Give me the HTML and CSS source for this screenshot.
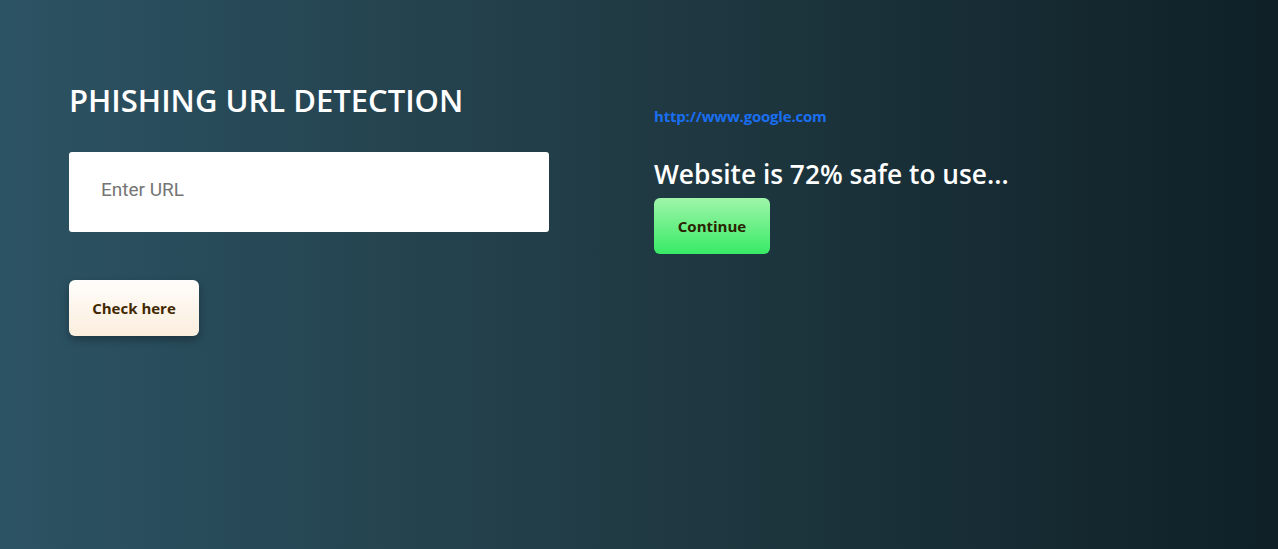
FILE: index.html
```html
<!DOCTYPE html>
<html lang="en">
<head>
<meta charset="utf-8">
<title>Phishing URL Detection</title>
<link rel="stylesheet" href="styles.css">
</head>
<body>
<main class="page">
  <section class="left">
    <h2 class="title">PHISHING URL DETECTION</h2>
    <form class="form">
      <input class="url-input" type="text" placeholder="Enter URL">
      <button class="btn btn-check" type="button">Check here</button>
    </form>
  </section>
  <section class="right">
    <a class="link" href="#">http://www.google.com</a>
    <h3 class="result">Website is 72% safe to use...</h3>
    <button class="btn btn-continue" type="button">Continue</button>
  </section>
</main>
</body>
</html>
```
FILE: styles.css
```css
html, body {
  margin: 0;
  height: 100%;
}
body {
  background: linear-gradient(to right, #2c5364, #203a43, #0f2027);
  font-family: "Open Sans", "Noto Sans", sans-serif;
  color: #fff;
}
.page {
  display: grid;
  grid-template-columns: 585px 1fr;
  padding: 78px 0 0 69px;
}
.title {
  margin: 0;
  font-size: 31px;
  font-weight: 600;
  line-height: 44px;
  letter-spacing: 0;
}
.form {
  display: flex;
  flex-direction: column;
  align-items: flex-start;
  margin-top: 30px;
  gap: 48px;
}
.url-input {
  box-sizing: border-box;
  width: 480px;
  height: 80px;
  border: none;
  border-radius: 3px;
  padding: 0 32px 6px;
  font-family: Roboto, sans-serif;
  font-size: 19px;
  color: #333;
  background: #fff;
  outline: none;
}
.url-input::placeholder {
  color: #757575;
}
.btn {
  height: 56px;
  border: none;
  border-radius: 6px;
  font-family: "Open Sans", "Noto Sans", sans-serif;
  font-size: 15px;
  font-weight: 700;
  cursor: pointer;
  padding: 0;
}
.btn-check {
  width: 130px;
  background: linear-gradient(to bottom, #fffdfb, #fbeedd);
  color: #422800;
  box-shadow: 0 4px 8px rgba(0, 0, 0, 0.3);
}
.right {
  display: flex;
  flex-direction: column;
  align-items: flex-start;
  padding-top: 27px;
}
.link {
  color: #1a6ef0;
  font-size: 15px;
  font-weight: 700;
  text-decoration: none;
  line-height: 22px;
  letter-spacing: -0.2px;
}
.result {
  margin: 30px 0 0;
  font-size: 26.3px;
  font-weight: 600;
  line-height: 34px;
  letter-spacing: 0;
}
.btn-continue {
  margin-top: 7px;
  width: 116px;
  background: linear-gradient(to bottom, #9ff5a9, #38ea66);
  color: #2a2200;
}
```
